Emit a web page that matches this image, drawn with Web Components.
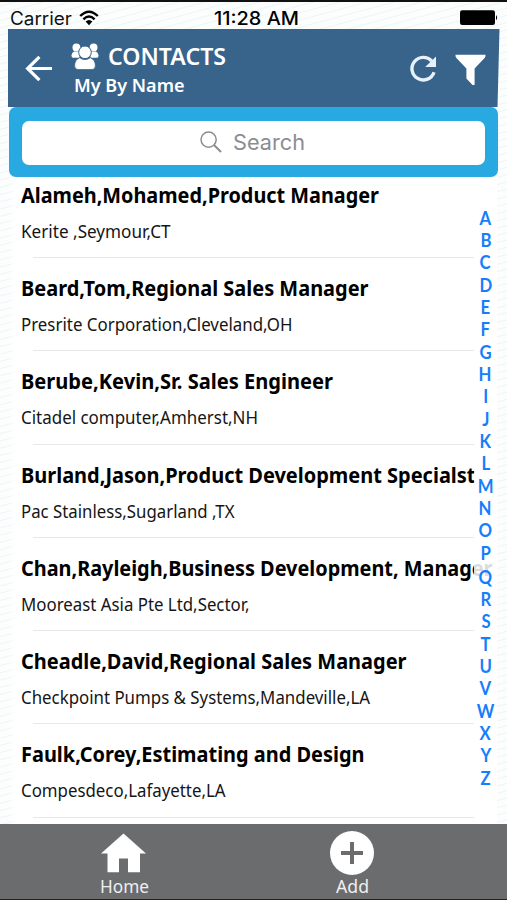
<!DOCTYPE html>
<html lang="en">
<head>
<meta charset="utf-8">
<meta name="viewport" content="width=device-width, initial-scale=1">
<title>Contacts</title>
<style>
  body { margin:0; font-family:"Noto Sans","Open Sans",sans-serif; color:#0a0a0a; background:#fff; }
</style>
</head>
<body>
<contacts-app></contacts-app>

<script>
// Single line of text, condensed or stretched to an exact width
class FitText extends HTMLElement {
  constructor() {
    super();
    this.attachShadow({ mode: "open" });
    this.shadowRoot.innerHTML = `
      <style>
        :host { display:block; white-space:nowrap; }
        span { display:inline-block; transform-origin:0 50%; }
      </style>
      <span><slot></slot></span>
    `;
  }

  connectedCallback() {
    const w = parseFloat(this.getAttribute("w"));
    this.style.width = `${w}px`;
    requestAnimationFrame(() => {
      const span = this.shadowRoot.querySelector("span");
      if (span.offsetWidth) span.style.transform = `scaleX(${w / span.getBoundingClientRect().width})`;
    });
  }
}
customElements.define("fit-text", FitText);

class StatusBar extends HTMLElement {
  constructor() {
    super();
    this.attachShadow({ mode: "open" });
    this.shadowRoot.innerHTML = `
      <style>
        :host {
          display:grid; grid-template-columns:204px 1fr auto; box-sizing:border-box;
          height:28.5px; border-top:2px solid #111; padding:0 9px 0 10px;
          font:18px/33px Inter,Roboto,sans-serif; color:#111;
        }
        .left { display:flex; gap:7px; }
        .time { font-weight:500; color:#000; }
        svg { display:block; }
        .wifi { margin-top:7.5px; }
        .battery { margin-top:8px; }
      </style>
      <div class="left">
        <fit-text w="62">Carrier</fit-text>
        <svg class="wifi" width="20" height="16" viewBox="0 0 20 16">
          <g fill="none" stroke="#000" stroke-width="2.4">
            <path d="M1.2 6 Q10 -2.6 18.8 6"/>
            <path d="M4.4 9.3 Q10 3.8 15.6 9.3"/>
          </g>
          <path d="M6.6 11.6 Q10 8.6 13.4 11.6 L10 15.2 Z"/>
        </svg>
      </div>
      <fit-text class="time" w="85">11:28 AM</fit-text>
      <svg class="battery" width="38" height="16" viewBox="0 0 38 16">
        <rect x="0" y="0.3" width="35" height="14.7" rx="2.2"/>
        <path d="M36 5 Q38.3 7.6 36 10.3 Z"/>
      </svg>
    `;
  }
}
customElements.define("status-bar", StatusBar);

class ContactsHeader extends HTMLElement {
  constructor() {
    super();
    this.attachShadow({ mode: "open" });
    this.shadowRoot.innerHTML = `
      <style>
        :host {
          display:flex; align-items:flex-start; box-sizing:border-box;
          width:492px; height:78.5px; margin-left:7.5px; padding-left:17px;
          background:#38638b; color:#fff;
          clip-path:polygon(0 0, 100% 0, calc(100% - 2px) 100%, 0 100%);
        }
        svg { display:block; flex:none; }
        .back { margin-top:26.5px; }
        .titles { margin-left:18px; padding-top:14px; flex:1; }
        .line { display:flex; gap:9px; height:28px; }
        .title { font-size:23px; font-weight:600; line-height:26px; }
        .sub { font-size:18.5px; font-weight:600; line-height:28px; margin-left:3px; }
        .tools { display:flex; gap:18px; padding:25px 13.5px 0 0; }
      </style>
      <svg class="back" width="28" height="27" viewBox="0 0 28 27">
        <path d="M14.4 1.8 L2.6 13.5 L14.4 25.2 M3 13.5 H27" fill="none" stroke="#fff" stroke-width="3.2"/>
      </svg>
      <div class="titles">
        <div class="line">
          <svg width="28" height="28" viewBox="0 0 28 28" fill="#fff">
            <circle cx="5.4" cy="4.4" r="3.9"/>
            <circle cx="22.6" cy="4.4" r="3.9"/>
            <path d="M3 8.5 H8 L8.6 14.8 H2.2 Q0.4 14.8 0.5 12.6 Q0.7 9.3 3 8.5 Z"/>
            <path d="M25 8.5 H20 L19.4 14.8 H25.8 Q27.6 14.8 27.5 12.6 Q27.3 9.3 25 8.5 Z"/>
            <circle cx="14" cy="9.3" r="6.3" stroke="#38638b" stroke-width="1"/>
            <path d="M8.7 14.7 Q14 18.5 19.3 14.7 Q24.4 16.6 24.4 22.8 Q24.4 26.6 21 26.6 H7 Q3.6 26.6 3.6 22.8 Q3.6 16.6 8.7 14.7 Z" stroke="#38638b" stroke-width=".8"/>
          </svg>
          <fit-text class="title" w="118">CONTACTS</fit-text>
        </div>
        <fit-text class="sub" w="110.5">My By Name</fit-text>
      </div>
      <div class="tools">
        <svg width="28" height="29" viewBox="0 0 28 29">
          <path d="M25 18.2 A11.3 11.3 0 1 1 22.6 7" fill="none" stroke="#e6f1fb" stroke-width="3.4"/>
          <path d="M27 2.5 V13 H16.2 Z" fill="#e6f1fb"/>
        </svg>
        <svg width="31" height="32" viewBox="0 0 31 32">
          <path d="M.5 .8 H30.5 Q30.8 2.8 29.6 4 L19.6 14.4 V31 H17.5 L11.4 24.5 V14.4 L1.4 4 Q.2 2.8 .5 .8 Z" fill="#fff"/>
        </svg>
      </div>
    `;
  }
}
customElements.define("contacts-header", ContactsHeader);

class SearchField extends HTMLElement {
  constructor() {
    super();
    this.attachShadow({ mode: "open" });
    this.shadowRoot.innerHTML = `
      <style>
        :host {
          display:block; box-sizing:border-box; width:489px; height:70px;
          margin-left:9px; padding:13.5px 13px 12px 12.5px;
          background:#29a9e1; border-radius:7px;
        }
        .box {
          display:flex; justify-content:center; gap:11px; height:44px;
          box-sizing:border-box; padding-right:2px;
          background:#fff; border-radius:7px; color:#8c8d91;
          font:21.5px/42px Inter,Roboto,sans-serif;
        }
        svg { margin-top:10.5px; }
      </style>
      <div class="box">
        <svg width="22" height="22" viewBox="0 0 22 22" fill="none" stroke="#8c8d91">
          <circle cx="8.6" cy="8.6" r="7.6" stroke-width="1.5"/>
          <path d="M14 14 L21 21" stroke-width="2"/>
        </svg>
        <fit-text w="72"><slot></slot></fit-text>
      </div>
    `;
  }
}
customElements.define("search-field", SearchField);

class ContactRow extends HTMLElement {
  constructor() {
    super();
    this.attachShadow({ mode: "open" });
    const w = this.getAttribute("w");
    const sw = this.getAttribute("sub-w");
    this.shadowRoot.innerHTML = `
      <style>
        :host {
          display:flex; flex-direction:column; justify-content:flex-end;
          flex:none; box-sizing:border-box; height:93.27px; padding-left:21px;
        }
        :host(:first-child) { height:81px; }
        .name { font-size:20.5px; font-weight:700; line-height:28px; margin-bottom:10px; color:#000; }
        .place { font-size:17.8px; line-height:24px; margin-bottom:14.3px; color:#151515; }
        hr { width:441px; height:1px; margin:0 0 0 12px; border:0; background:#e7e8e9; }
      </style>
      <fit-text class="name" w="${w}"><slot name="name"></slot></fit-text>
      <fit-text class="place" w="${sw}"><slot></slot></fit-text>
      <hr>
    `;
  }
}

class AlphaIndex extends HTMLElement {
  constructor() {
    super();
    this.attachShadow({ mode: "open" });
    const letters = [..."ABCDEFGHIJKLMNOPQRSTUVWXYZ"];
    this.shadowRoot.innerHTML = `
      <style>
        :host {
          display:flex; flex-direction:column; align-items:center;
          box-sizing:border-box; width:23px; padding-top:29.6px;
          background:rgba(255,255,255,.86); color:#157efb;
          font:700 18.2px/22.35px Lato,"Open Sans",sans-serif;
        }
        span { height:22.35px; transform:scaleX(.92); }
        .q { margin-top:1.5px; }
      </style>
      ${letters.map(l => `<span class="${l.toLowerCase()}">${l}</span>`).join("")}
    `;
  }
}
customElements.define("alpha-index", AlphaIndex);

class TabItem extends HTMLElement {
  constructor() {
    super();
    this.attachShadow({ mode: "open" });
    this.shadowRoot.innerHTML = `
      <style>
        :host {
          display:flex; flex-direction:column; align-items:center;
          font-size:17.5px; line-height:23px; color:#efefef;
        }
        ::slotted(svg) { display:block; }
      </style>
      <slot name="icon"></slot>
      <fit-text w="${this.getAttribute("w")}"><slot></slot></fit-text>
    `;
  }
}

const CONTACTS = [
  ["Alameh,Mohamed,Product Manager", 358, "Kerite ,Seymour,CT", 149.5],
  ["Beard,Tom,Regional Sales Manager", 347.5, "Presrite Corporation,Cleveland,OH", 271.5],
  ["Berube,Kevin,Sr. Sales Engineer", 312, "Citadel computer,Amherst,NH", 237],
  ["Burland,Jason,Product Development Specialst", 454.5, "Pac Stainless,Sugarland ,TX", 213.5],
  ["Chan,Rayleigh,Business Development, Manager", 471.5, "Mooreast Asia Pte Ltd,Sector,", 228.5],
  ["Cheadle,David,Regional Sales Manager", 385.5, "Checkpoint Pumps &amp; Systems,Mandeville,LA", 349],
  ["Faulk,Corey,Estimating and Design", 343.5, "Compesdeco,Lafayette,LA", 204.5],
];

class ContactsApp extends HTMLElement {
  constructor() {
    super();
    this.attachShadow({ mode: "open" });
    this.shadowRoot.innerHTML = `
      <style>
        :host {
          display:flex; flex-direction:column; width:507px; height:900px; overflow:hidden;
          background:repeating-linear-gradient(165deg, #fcfefe 0 5px, #edf5f7 6px, #fcfefe 7px);
        }
        .body {
          display:grid; grid-template-columns:474px 23px; flex:1; min-height:0;
          margin-right:10px; overflow:hidden;
          background:linear-gradient(90deg, transparent 9px, #fff 16px);
        }
        .list { display:flex; flex-direction:column; grid-area:1/1; min-width:0; }
        alpha-index { grid-area:1/2; z-index:1; }
        .tabs {
          display:grid; grid-template-columns:228px 228px; padding-left:10px; flex:none;
          box-sizing:border-box; height:76.5px; background:#6b6c6e; border-bottom:1px solid #222;
        }
      </style>
      <status-bar></status-bar>
      <contacts-header></contacts-header>
      <search-field>Search</search-field>
      <div class="body">
        <div class="list">
          ${CONTACTS.map(([name, w, place, sw]) => `
            <contact-row w="${w}" sub-w="${sw}"><span slot="name">${name}</span>${place}</contact-row>
          `.trim()).join("")}
        </div>
        <alpha-index></alpha-index>
      </div>
      <div class="tabs">
        <tab-item w="49">
          <svg slot="icon" width="46" height="51" viewBox="0 0 46 51" fill="#fff">
            <path d="M22.5 9.5 L45 29.5 H39 V48.3 H27 V34.5 H18 V48.3 H6.5 V29.5 H0 Z"/>
          </svg>Home
        </tab-item>
        <tab-item w="33">
          <svg slot="icon" width="46" height="51" viewBox="0 0 46 51">
            <circle cx="23" cy="29" r="22" fill="#fff"/>
            <path d="M12 29 H34 M23 18 V40" stroke="#6b6c6e" stroke-width="4"/>
          </svg>Add
        </tab-item>
      </div>
    `;
  }
}

customElements.define("contacts-app", ContactsApp);
customElements.define("contact-row", ContactRow);
customElements.define("tab-item", TabItem);
</script>
</body>
</html>
